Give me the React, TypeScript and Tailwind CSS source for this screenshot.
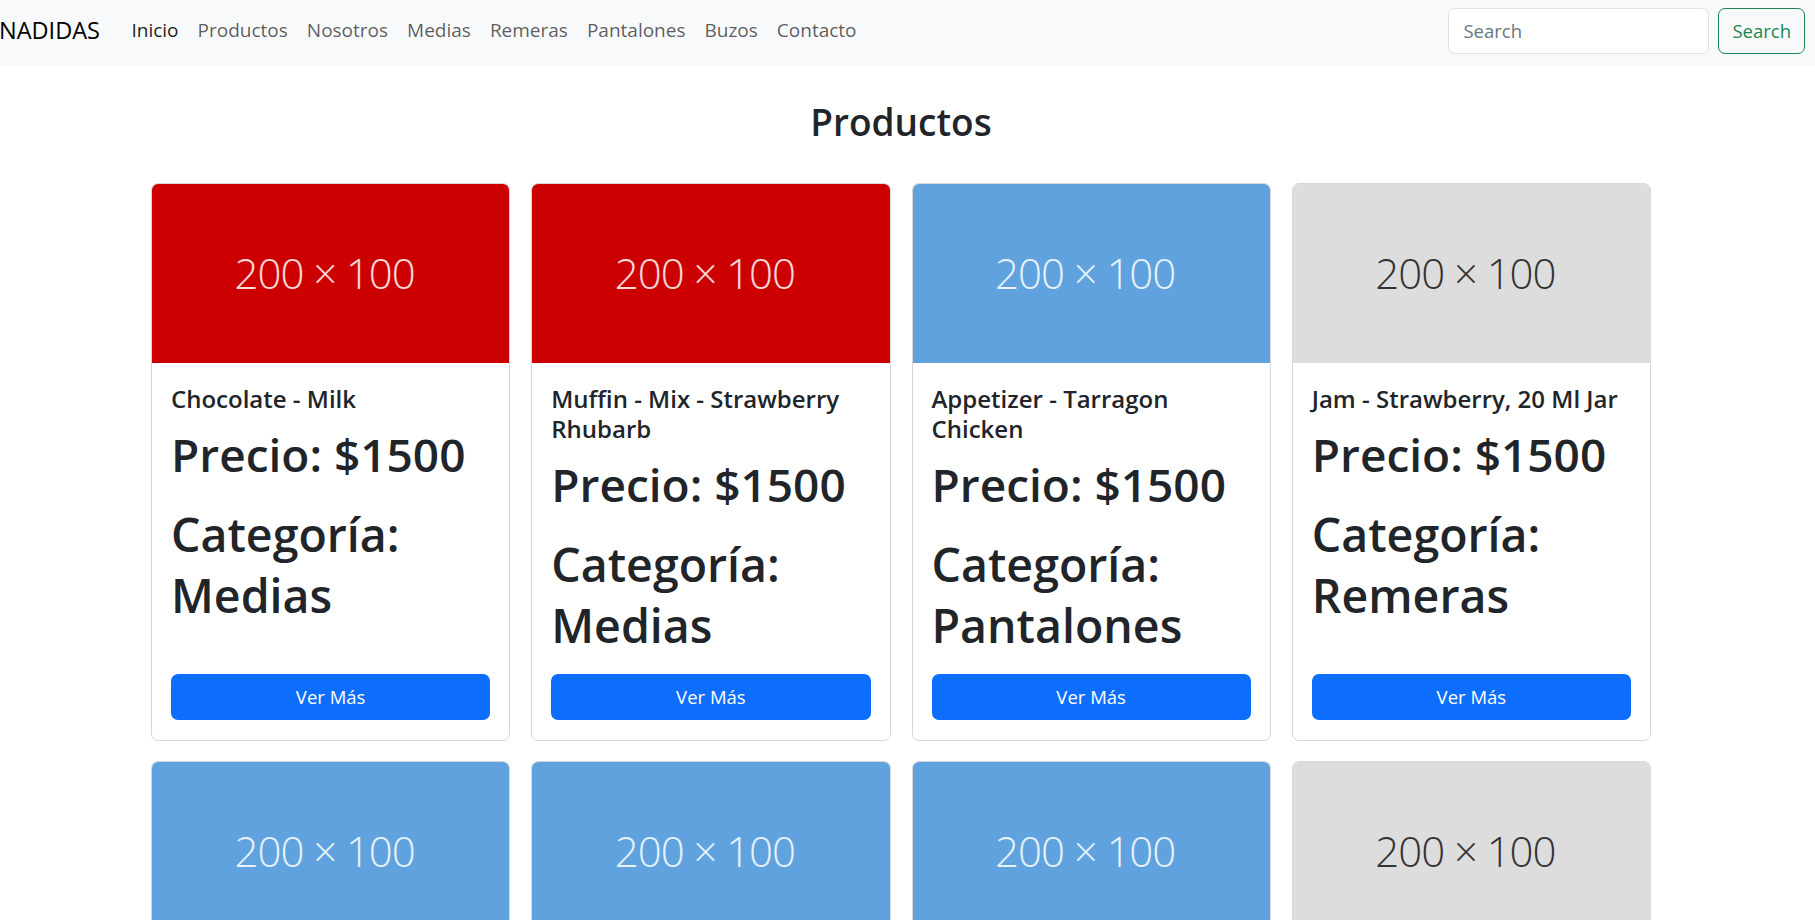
const font = { fontFamily: '"Open Sans", "Noto Sans", sans-serif' };

type Product = {
  name: string;
  price: number;
  category: string;
  img: "red" | "blue" | "gray";
};

const products: Product[] = [
  { name: "Chocolate - Milk", price: 1500, category: "Medias", img: "red" },
  { name: "Muffin - Mix - Strawberry Rhubarb", price: 1500, category: "Medias", img: "red" },
  { name: "Appetizer - Tarragon Chicken", price: 1500, category: "Pantalones", img: "blue" },
  { name: "Jam - Strawberry, 20 Ml Jar", price: 1500, category: "Remeras", img: "gray" },
  { name: "Wine - White, Pinot Grigio", price: 1500, category: "Buzos", img: "blue" },
  { name: "Bread - Multigrain Loaf", price: 1500, category: "Remeras", img: "blue" },
  { name: "Sauce - Hollandaise", price: 1500, category: "Pantalones", img: "blue" },
  { name: "Cheese - Brie, Triple Creme", price: 1500, category: "Medias", img: "gray" },
];

const links = ["Productos", "Nosotros", "Medias", "Remeras", "Pantalones", "Buzos", "Contacto"];

function Placeholder({ color }: { color: Product["img"] }) {
  const bg =
    color === "red" ? "bg-[#cc0000] text-white/85" : color === "blue" ? "bg-[#5fa2dd] text-white/85" : "bg-[#dddddd] text-[#333333]";
  return (
    <div className={`flex h-[179px] items-center justify-center rounded-t-[6px] pr-[12px] pb-[2px] ${bg}`}>
      <span className="text-[42px] font-light tracking-tight">200 × 100</span>
    </div>
  );
}

function Card({ p }: { p: Product }) {
  return (
    <div className="flex flex-col rounded-[7px] border border-[#d6d7d8] bg-white">
      <Placeholder color={p.img} />
      <div className="flex flex-1 flex-col px-[19px] pt-[21px] pb-[20px] text-[#212529]">
        <h5 className="mb-[13px] text-[24px] leading-[30px] font-semibold">{p.name}</h5>
        <h1 className="mb-[22px] text-[46px] leading-[55px] font-semibold">Precio: ${p.price}</h1>
        <h1 className="mb-[18px] text-[46.5px] leading-[61px] font-semibold">Categoría: {p.category}</h1>
        <button className="mt-auto h-[46px] w-full rounded-[7px] bg-[#0d6efd] text-[18.5px] text-white">
          Ver Más
        </button>
      </div>
    </div>
  );
}

export default function App() {
  return (
    <div className="min-h-screen w-full overflow-hidden bg-white" style={font}>
      {/* Navbar */}
      <nav className="flex h-[65px] items-center bg-[#f8f9fa] pr-[10px] pb-[4px]">
        <a className="ml-[-1px] mr-[22px] text-[23.5px] text-black">NADIDAS</a>
        <ul className="flex items-center">
          <li className="px-[9.5px] text-[19px] text-black/90">Inicio</li>
          {links.map((l) => (
            <li key={l} className="px-[9.5px] text-[19px] text-black/65">
              {l}
            </li>
          ))}
        </ul>
        <form className="ml-auto flex items-center gap-[9px]">
          <input
            placeholder="Search"
            className="h-[46px] w-[261px] rounded-[7px] border border-[#dee2e6] bg-white px-[14px] text-[18.5px] placeholder:text-[#6c757d] outline-none"
          />
          <button
            type="button"
            className="h-[46px] rounded-[7px] border border-[#198754] px-[13px] text-[18.5px] text-[#198754]"
          >
            Search
          </button>
        </form>
      </nav>

      {/* Content */}
      <main className="ml-[151px] w-[1500px]">
        <h2 className="mt-[34px] mb-[39px] text-center text-[37px] leading-[45px] font-semibold text-[#212529]">
          Productos
        </h2>
        <div className="grid grid-cols-4 gap-x-[21px] gap-y-[20px]">
          {products.map((p) => (
            <Card key={p.name} p={p} />
          ))}
        </div>
      </main>
    </div>
  );
}
